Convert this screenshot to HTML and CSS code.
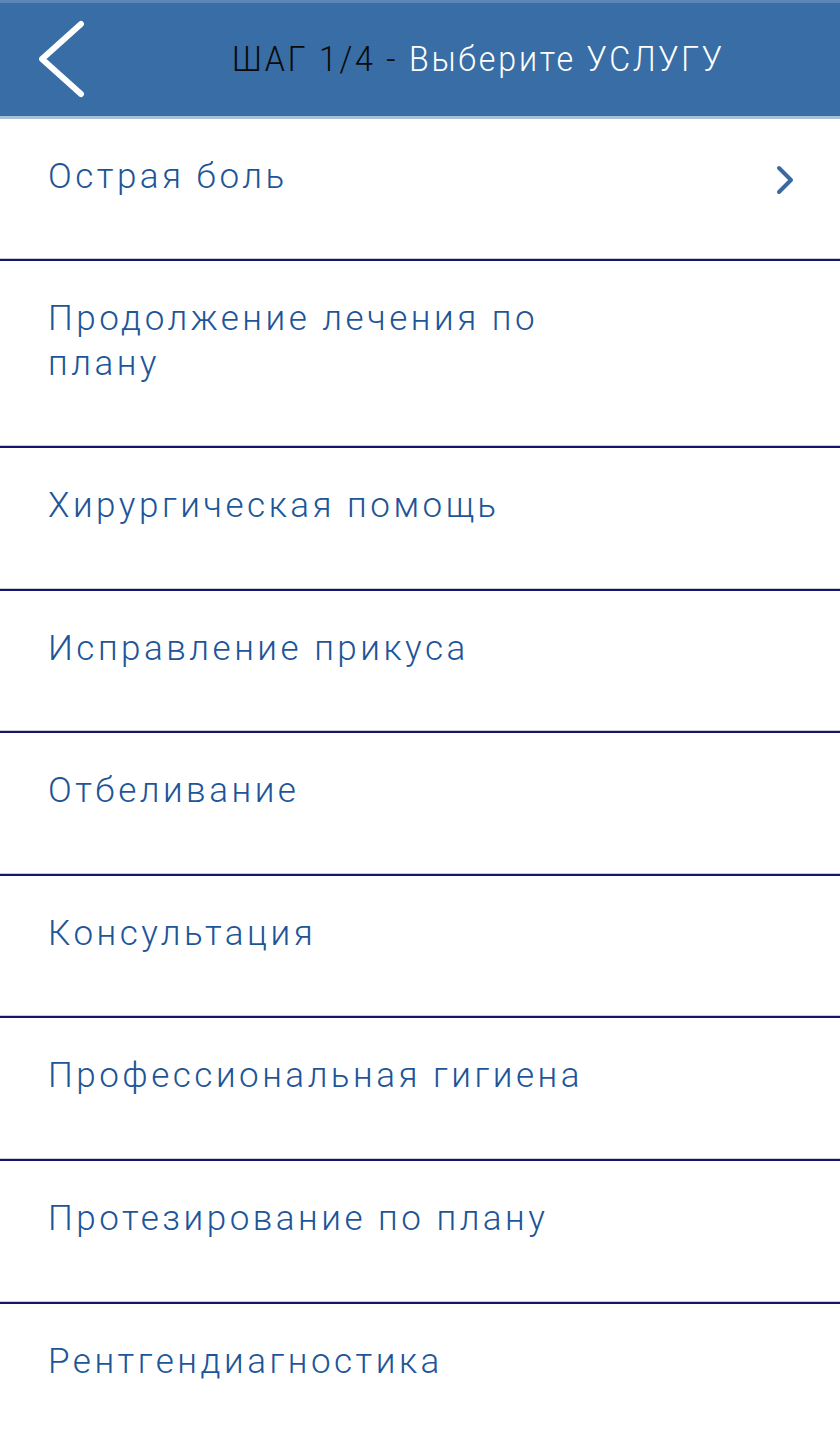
FILE: index.html
```html
<!DOCTYPE html>
<html lang="ru">
<head>
<meta charset="utf-8">
<title>ШАГ 1/4</title>
<link rel="stylesheet" href="styles.css">
</head>
<body>
<header class="topbar">
  <button class="back" aria-label="Назад">
    <svg width="60" height="84" viewBox="0 0 60 84"><polyline points="42,5 3,40 42,75" fill="none" stroke="#fff" stroke-width="6" stroke-linecap="round" stroke-linejoin="round"/></svg>
  </button>
  <h1 class="title"><span class="step">ШАГ 1/4 - </span><span class="name">Выберите УСЛУГУ</span></h1>
</header>
<ul class="list">
  <li class="item"><span class="label">Острая боль</span>
    <svg class="chev" width="20" height="30" viewBox="0 0 20 30"><polyline points="3,3 15,15 3,27" fill="none" stroke="#3a6aa0" stroke-width="4" stroke-linecap="round" stroke-linejoin="round"/></svg>
  </li>
  <li class="item"><span class="label">Продолжение лечения по<br>плану</span></li>
  <li class="item"><span class="label">Хирургическая помощь</span></li>
  <li class="item"><span class="label">Исправление прикуса</span></li>
  <li class="item"><span class="label">Отбеливание</span></li>
  <li class="item"><span class="label">Консультация</span></li>
  <li class="item"><span class="label">Профессиональная гигиена</span></li>
  <li class="item"><span class="label">Протезирование по плану</span></li>
  <li class="item"><span class="label">Рентгендиагностика</span></li>
</ul>
</body>
</html>
```
FILE: styles.css
```css
* { box-sizing: border-box; }
html, body { margin: 0; padding: 0; background: #fff; }
body { font-family: Roboto, "Noto Sans", sans-serif; width: 840px; height: 1437px; overflow: hidden; }
.topbar {
  height: 119px;
  background: #386da5;
  border-top: 3px solid #5b87b6;
  border-bottom: 3px solid #a9c0da;
  display: flex;
  align-items: center;
}
.back {
  background: none; border: 0; padding: 0;
  margin-left: 39px; margin-top: 2px;
  display: flex;
}
.title {
  margin: 0 0 0 133px;
  font-weight: 300;
  font-size: 35px;
  letter-spacing: 3px;
  transform-origin: left center;
  transform: scaleX(0.92);
  white-space: nowrap;
}
.step { color: #0a0a0a; }
.name { color: #fff; }
.list { list-style: none; margin: 0; padding: 0; }
.item {
  display: flex;
  align-items: flex-start;
  justify-content: space-between;
  padding: 35px 44px 60.6px 48px;
  border-bottom: 2px solid #14156e;
  box-shadow: 0 -1px 0 #c9cbd6 inset;
}
.item:first-child { padding-top: 35px; padding-bottom: 59.5px; }
.label {
  font-weight: 300;
  font-size: 35px;
  line-height: 45px;
  letter-spacing: 3.5px;
  color: #1d5598;
}
.chev { margin-top: 11px; }
```
